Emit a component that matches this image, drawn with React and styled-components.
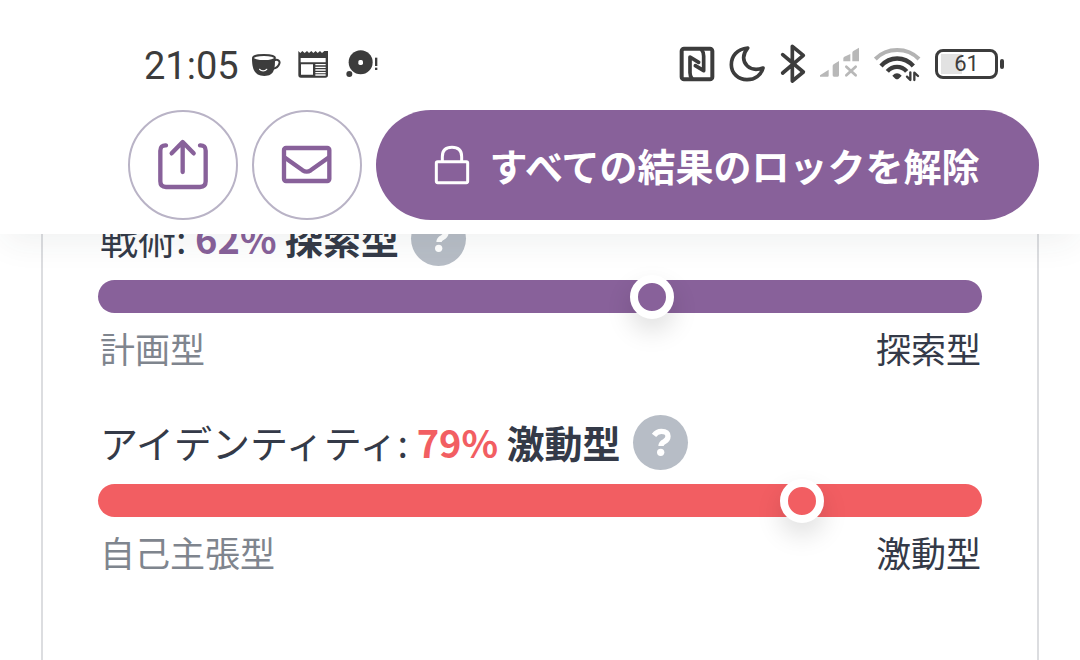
import React from "react";
import styled, { createGlobalStyle } from "styled-components";

const purple = "#88619a";
const red = "#f25e62";
const ink = "#343a48";
const statusInk = "#3c3c3c";

const GlobalStyle = createGlobalStyle`
  *, *::before, *::after { box-sizing: border-box; }
  body {
    margin: 0;
    background: #fff;
    color: ${ink};
    font-family: "Noto Sans CJK JP", sans-serif;
  }
`;

const Page = styled.div`
  min-height: 100vh;
  display: flex;
  flex-direction: column;
`;

const Header = styled.header`
  position: sticky;
  top: 0;
  z-index: 2;
  padding-bottom: 14px;
  background: #fff;
  box-shadow: 0 12px 32px -4px rgba(40, 50, 50, 0.07);
`;

const StatusBar = styled.div`
  display: flex;
  align-items: center;
  justify-content: space-between;
  height: 110px;
  padding: 18px 76px 0 144px;
  color: ${statusInk};
  font-family: Roboto, sans-serif;
`;

const StatusGroup = styled.div`
  display: flex;
  align-items: center;
  gap: ${(p) => p.$gap}px;
`;

const Time = styled.time`
  margin-right: -4px;
  padding-top: 4px;
  font-size: 38px;
  line-height: 44px;
`;

const Glyph = styled.svg`
  display: block;
  flex: none;
  fill: none;
  stroke: currentColor;
  stroke-linecap: round;
  stroke-linejoin: round;
`;

const Battery = styled.div`
  position: relative;
  display: flex;
  align-items: center;
  justify-content: center;
  width: 63px;
  height: 30px;
  margin-right: 6px;
  border: 3px solid ${statusInk};
  border-radius: 8px;
  background: linear-gradient(#e2e2e2, #e2e2e2) 3px 2px / 21px 20px no-repeat;
  font-size: 22px;
  line-height: 24px;

  &::after {
    content: "";
    position: absolute;
    top: 7px;
    right: -9px;
    width: 4px;
    height: 10px;
    border-radius: 2px;
    background: ${statusInk};
  }
`;

const Actions = styled.div`
  display: flex;
  gap: 14px;
  padding: 0 41px 0 128px;
`;

const RoundButton = styled.button`
  display: flex;
  align-items: center;
  justify-content: center;
  flex: none;
  width: 110px;
  height: 110px;
  padding: 0;
  border: 2px solid #b9b3c6;
  border-radius: 50%;
  background: #fff;
  color: ${purple};
`;

const UnlockButton = styled.button`
  display: flex;
  align-items: center;
  justify-content: center;
  flex: 1;
  gap: 20px;
  height: 110px;
  padding: 0 22px 0 20px;
  border: 0;
  border-radius: 55px;
  background: ${purple};
  color: #fff;
  font: 700 38px/56px "Noto Sans CJK JP", sans-serif;
  white-space: nowrap;
`;

const Panel = styled.main`
  display: flex;
  flex-direction: column;
  flex: 1;
  gap: 40px;
  margin: -24px 41px 0;
  padding: 0 55px 40px;
  border: solid #dcdde0;
  border-width: 0 2px;
`;

const Trait = styled.section`
  display: flex;
  flex-direction: column;
`;

const TitleRow = styled.div`
  display: flex;
  align-items: center;
  gap: 12px;
  height: 56px;
  padding-left: 2px;
`;

const Title = styled.h2`
  margin: 0;
  font-size: 38px;
  font-weight: 400;
  line-height: 56px;
  white-space: nowrap;
`;

const Percent = styled.strong`
  color: ${(p) => p.$color};
`;

const HelpButton = styled.button`
  flex: none;
  width: 55px;
  height: 55px;
  padding: 0;
  border: 0;
  border-radius: 50%;
  background: #b7bdc6;
  color: #fff;
`;

const Track = styled.div`
  display: flex;
  height: 33px;
  margin-top: 14px;
  border-radius: 17px;
  background: ${(p) => p.$color};
`;

const Range = styled.input`
  appearance: none;
  flex: 1;
  min-width: 0;
  height: 33px;
  margin: 0 -28px 0 -16px;
  background: transparent;

  &::-webkit-slider-thumb {
    appearance: none;
    width: 44px;
    height: 44px;
    border: 8px solid #fff;
    border-radius: 50%;
    background: ${(p) => p.$color};
    box-shadow: 0 12px 26px rgba(0, 0, 0, 0.13);
  }
`;

const Ends = styled.div`
  display: flex;
  justify-content: space-between;
  margin-top: 9px;
  padding: 0 1px 0 2px;
  font-size: 35px;
  line-height: 52px;
`;

const End = styled.span`
  color: ${(p) => (p.$muted ? "#7f858e" : ink)};
`;

const CupIcon = () => (
  <Glyph width="30" height="30" viewBox="360 42 90 90" aria-hidden="true">
    <path d="M363 70c0 30 6 53 37 53s32-23 32-53z" fill="currentColor" stroke="none" />
    <ellipse cx="399" cy="69" rx="33" ry="9" fill="#fff" strokeWidth="6" />
    <path d="M428 77c12-6 20 0 17 9-3 9-10 14-19 15" strokeWidth="6" />
    <path d="M386 103c5 6 16 6 21 0" stroke="#fff" strokeWidth="4" />
  </Glyph>
);

const NewsIcon = () => (
  <Glyph width="32" height="30" viewBox="501 42 96 90" aria-hidden="true">
    <path
      d="M505 48l6 6 6-6 7 6 7-6 6 6 7-6 6 6 7-6 6 6 7-6 6 6 7-6 11 0V120q0 8-8 8H513q-8 0-8-8z"
      fill="currentColor"
      stroke="none"
    />
    <path d="M512 69h75v13h-75zM513 88h36v31h-36z" fill="#fff" stroke="none" />
    <path d="M556 89h31M556 97h31M556 105h31M556 113h31M556 120h31" stroke="#fff" strokeWidth="4" strokeLinecap="butt" />
  </Glyph>
);

const DiscIcon = () => (
  <Glyph width="34" height="30" viewBox="648 42 102 90" aria-hidden="true">
    <g fill="currentColor" stroke="none">
      <circle cx="695" cy="82" r="36" />
      <circle cx="661" cy="117" r="9" />
      <rect x="738" y="68" width="7" height="25" />
      <rect x="738" y="98" width="7" height="7" />
    </g>
    <rect x="688" y="75" width="14" height="15" rx="5" fill="#fff" stroke="none" />
  </Glyph>
);

const NfcIcon = () => (
  <Glyph width="36" height="36" viewBox="27 33 108 108" aria-hidden="true">
    <rect x="35" y="41" width="92" height="92" rx="7" strokeWidth="12" />
    <path d="M66 131q-6-7-6-18V66l26 16" strokeWidth="11" />
    <path d="M94 43q7 8 7 20v44L76 92" strokeWidth="11" />
  </Glyph>
);

const MoonIcon = () => (
  <Glyph width="37" height="36" viewBox="180 33 111 108" aria-hidden="true">
    <path
      d="M236 39C204 42 187 64 187 89c0 26 21 45 47 45 24 0 42-14 48-35-17 6-35 5-47-6-15-14-15-35 1-54z"
      strokeWidth="11"
    />
  </Glyph>
);

const BluetoothIcon = () => (
  <Glyph width="26" height="40" viewBox="330 27 78 120" aria-hidden="true">
    <path d="M338 59l62 52-33 27V34l33 27-62 53" strokeWidth="11" />
  </Glyph>
);

const SignalIcon = () => (
  <Glyph width="40" height="36" viewBox="450 36 120 108" aria-hidden="true">
    <g fill="#b8b8b8" stroke="none">
      <path d="M450 128v-4l26-17v18q0 3-3 3zM488 96q0-3 3-5l16-10v43q0 4-4 4h-11q-4 0-4-4z" />
      <path d="M520 73q0-3 3-5l18-8v22h-21zM547 56q0-3 3-5l17-10v41h-20z" />
    </g>
    <path d="M529 98l28 26M557 98l-28 26" stroke="#b8b8b8" strokeWidth="8" />
  </Glyph>
);

const WifiIcon = () => (
  <Glyph width="47" height="36" viewBox="102 36 141 108" aria-hidden="true">
    <g strokeLinecap="butt">
      <path d="M106 75c35-36 96-36 131 0" stroke="#b3b3b3" strokeWidth="12" />
      <path d="M123 96c27-30 70-30 97 0" strokeWidth="13" />
      <path d="M142 112c16-18 42-18 58 0" strokeWidth="13" />
    </g>
    <path d="M157 125q14-14 28 0l-9 9q-5 4-10 0z" fill="currentColor" stroke="none" />
    <path d="M211 115v23l-10-10M223 138v-22l11 10" strokeWidth="7" />
  </Glyph>
);

const ShareIcon = () => (
  <Glyph width="60" height="60" viewBox="129 105 180 180" strokeWidth="13" aria-hidden="true">
    <path d="M168 136q-17-1-17 16v92q0 17 17 17h102q17 0 17-17v-92q0-17-17-16" />
    <path d="M218 216v-89M185 160l33-34 33 34" />
  </Glyph>
);

const MailIcon = () => (
  <Glyph width="60" height="60" viewBox="501 105 180 180" strokeWidth="13" aria-hidden="true">
    <rect x="522" y="144" width="136" height="99" rx="6" />
    <path d="M525 173l53 38q12 8 24 0l53-38" />
  </Glyph>
);

const LockIcon = () => (
  <Glyph width="36" height="40" viewBox="190 135 108 120" strokeWidth="9" aria-hidden="true">
    <rect x="197" y="185" width="94" height="63" rx="4" />
    <path d="M215 184v-14q0-28 29-28t29 28v14" />
  </Glyph>
);

const QuestionIcon = () => (
  <Glyph width="55" height="55" viewBox="582 45 165 165" aria-hidden="true">
    <path d="M645 106q9-12 22-12 20 0 20 15 0 10-11 16-10 5-10 13" strokeWidth="16" strokeLinecap="butt" />
    <circle cx="665" cy="157" r="11" fill="currentColor" stroke="none" />
  </Glyph>
);

const traits = [
  { name: "戦術", value: 62, result: "探索型", from: "計画型", to: "探索型", color: purple },
  { name: "アイデンティティ", value: 79, result: "激動型", from: "自己主張型", to: "激動型", color: red },
];

function TraitResult({ name, value, result, from, to, color }) {
  return (
    <Trait>
      <TitleRow>
        <Title>
          {name}: <Percent $color={color}>{value}%</Percent> <strong>{result}</strong>
        </Title>
        <HelpButton type="button" aria-label={`${name}の説明`}>
          <QuestionIcon />
        </HelpButton>
      </TitleRow>
      <Track $color={color}>
        <Range type="range" min="0" max="100" value={value} readOnly aria-label={name} $color={color} />
      </Track>
      <Ends>
        <End $muted>{from}</End>
        <End>{to}</End>
      </Ends>
    </Trait>
  );
}

export default function App() {
  return (
    <Page>
      <GlobalStyle />
      <Header>
        <StatusBar>
          <StatusGroup $gap={16}>
            <Time>21:05</Time>
            <CupIcon />
            <NewsIcon />
            <DiscIcon />
          </StatusGroup>
          <StatusGroup $gap={14}>
            <NfcIcon />
            <MoonIcon />
            <BluetoothIcon />
            <SignalIcon />
            <WifiIcon />
            <Battery>61</Battery>
          </StatusGroup>
        </StatusBar>
        <Actions>
          <RoundButton type="button" aria-label="共有">
            <ShareIcon />
          </RoundButton>
          <RoundButton type="button" aria-label="メール">
            <MailIcon />
          </RoundButton>
          <UnlockButton type="button">
            <LockIcon />
            すべての結果のロックを解除
          </UnlockButton>
        </Actions>
      </Header>
      <Panel>
        {traits.map((trait) => (
          <TraitResult key={trait.name} {...trait} />
        ))}
      </Panel>
    </Page>
  );
}
